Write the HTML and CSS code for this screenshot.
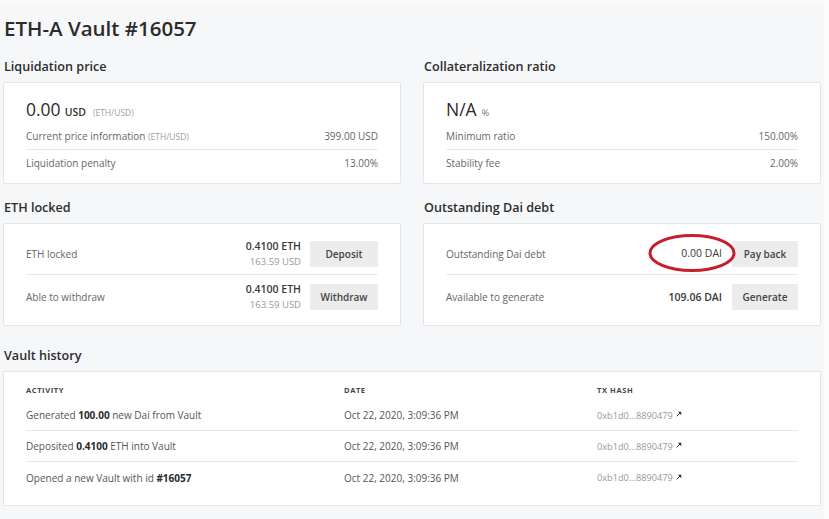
FILE: index.html
```html
<!DOCTYPE html>
<html>
<head>
<meta charset="utf-8">
<link rel="stylesheet" href="styles.css">
</head>
<body>
<div class="page">
  <h1 class="title">ETH-A Vault #16057</h1>

  <div class="grid">
    <section class="section">
      <h2 class="heading">Liquidation price</h2>
      <div class="card card-info">
        <div class="big"><span class="big-num">0.00</span><span class="big-unit">USD</span><span class="big-note">(ETH/USD)</span></div>
        <div class="row row-line"><span class="label">Current price information <span class="note">(ETH/USD)</span></span><span class="val">399.00 USD</span></div>
        <div class="row"><span class="label">Liquidation penalty</span><span class="val">13.00%</span></div>
      </div>
    </section>

    <section class="section">
      <h2 class="heading">Collateralization ratio</h2>
      <div class="card card-info">
        <div class="big"><span class="big-num">N/A</span><span class="big-pct">%</span></div>
        <div class="row row-line"><span class="label">Minimum ratio</span><span class="val">150.00%</span></div>
        <div class="row"><span class="label">Stability fee</span><span class="val">2.00%</span></div>
      </div>
    </section>

    <section class="section">
      <h2 class="heading">ETH locked</h2>
      <div class="card card-act">
        <div class="arow arow-line">
          <span class="label">ETH locked</span>
          <div class="amount"><div class="amt-main">0.4100 ETH</div><div class="amt-sub">163.59 USD</div></div>
          <button class="btn">Deposit</button>
        </div>
        <div class="arow arow-last">
          <span class="label">Able to withdraw</span>
          <div class="amount"><div class="amt-main">0.4100 ETH</div><div class="amt-sub">163.59 USD</div></div>
          <button class="btn">Withdraw</button>
        </div>
      </div>
    </section>

    <section class="section">
      <h2 class="heading">Outstanding Dai debt</h2>
      <div class="card card-act">
        <div class="arow arow-line">
          <span class="label">Outstanding Dai debt</span>
          <div class="amount amount-dai"><div class="amt-main amt-zero">0.00 DAI</div>
            <svg class="circle" viewBox="0 0 88 40" width="88" height="40"><ellipse cx="44" cy="20" rx="42" ry="17.5" fill="none" stroke="#c81e2c" stroke-width="3"/></svg>
          </div>
          <button class="btn btn-r">Pay back</button>
        </div>
        <div class="arow arow-last">
          <span class="label">Available to generate</span>
          <div class="amount amount-dai"><div class="amt-main">109.06 DAI</div></div>
          <button class="btn btn-r">Generate</button>
        </div>
      </div>
    </section>
  </div>

  <section class="section history">
    <h2 class="heading">Vault history</h2>
    <div class="card card-hist">
      <div class="trow thead">
        <span>Activity</span><span>Date</span><span>Tx hash</span>
      </div>
      <div class="trow tline">
        <span>Generated <b>100.00</b> new Dai from Vault</span>
        <span>Oct 22, 2020, 3:09:36 PM</span>
        <span class="hash">0xb1d0...8890479 <svg class="ext" viewBox="0 0 8 8" width="6" height="6"><path d="M1 7 L6 2" stroke="#333" stroke-width="1.3" fill="none"/><path d="M2.5 1 H7 V5.5 Z" fill="#333"/></svg></span>
      </div>
      <div class="trow tline">
        <span>Deposited <b>0.4100</b> ETH into Vault</span>
        <span>Oct 22, 2020, 3:09:36 PM</span>
        <span class="hash">0xb1d0...8890479 <svg class="ext" viewBox="0 0 8 8" width="6" height="6"><path d="M1 7 L6 2" stroke="#333" stroke-width="1.3" fill="none"/><path d="M2.5 1 H7 V5.5 Z" fill="#333"/></svg></span>
      </div>
      <div class="trow">
        <span>Opened a new Vault with id <b>#16057</b></span>
        <span>Oct 22, 2020, 3:09:36 PM</span>
        <span class="hash">0xb1d0...8890479 <svg class="ext" viewBox="0 0 8 8" width="6" height="6"><path d="M1 7 L6 2" stroke="#333" stroke-width="1.3" fill="none"/><path d="M2.5 1 H7 V5.5 Z" fill="#333"/></svg></span>
      </div>
    </div>
  </section>
</div>
</body>
</html>
```

FILE: styles.css
```css
* { box-sizing: border-box; }
html, body { margin: 0; padding: 0; }
body {
  background: #fbfbfc;
  font-family: "Open Sans", "Noto Sans", sans-serif;
  color: #333;
  width: 829px;
  height: 519px;
  overflow: hidden;
}
.page {
  background: #f6f7f9;
  width: 824px;
  padding: 13px 0 0 3px;
  height: 515px;
  margin-top: 4px;
}
.title {
  margin: -4px 0 14px 1px;
  font-size: 20.5px;
  line-height: 30px;
  font-weight: 600;
  color: #2b2b2b;
}
.grid {
  display: grid;
  grid-template-columns: 398px 398px;
  column-gap: 22px;
  row-gap: 14px;
}
.heading {
  margin: 0 0 5px 1px;
  font-size: 12.6px;
  line-height: 20px;
  font-weight: 600;
  color: #2d2d2d;
}
.card {
  background: #fff;
  border: 1px solid #e4e6ea;
  border-radius: 2px;
}
.card-info {
  padding: 13px 22px 7px;
  height: 102px;
}
.big {
  height: 26px;
  display: flex;
  align-items: baseline;
  line-height: 26px;
}
.big-num { font-size: 17.5px; color: #2b2b2b; font-weight: 500; }
.big-unit { font-size: 10.5px; font-weight: 600; color: #333; margin-left: 4px; }
.big-note { font-size: 8.5px; color: #a0a0a0; margin-left: 7px; }
.big-pct { font-size: 9px; color: #777; margin-left: 5px; }
.row {
  height: 26px;
  display: flex;
  justify-content: space-between;
  align-items: center;
  font-size: 10px;
  color: #666;
}
.row-line { height: 28px; border-bottom: 1px solid #e6e6e6; }
.label { font-size: 10px; color: #666; }
.note { font-size: 8.5px; color: #a0a0a0; }
.val { font-size: 10px; color: #666; }

.card-act {
  padding: 9px 22px 6px;
  height: 103px;
}
.arow {
  height: 42px;
  display: flex;
  align-items: center;
}
.arow-line { height: 42px; border-bottom: 1px solid #e6e6e6; }
.arow-last { height: 44px; }
.arow .label { flex: 1; }
.amount { text-align: right; margin-right: 9px; position: relative; }
.amount-dai { margin-right: 10px; }
.amt-main { font-size: 10.5px; font-weight: 600; color: #3a3a3a; line-height: 15px; }
.amt-sub { font-size: 9.5px; color: #9a9a9a; line-height: 15px; }
.amt-zero { font-weight: 500; }
.btn {
  width: 68px;
  height: 26px;
  border: none;
  background: #ececec;
  font-family: inherit;
  font-size: 10px;
  font-weight: 600;
  color: #444;
  padding: 0;
  border-radius: 1px;
}
.btn-r { width: 66px; }
.circle {
  position: absolute;
  left: -33px;
  top: 50%;
  margin-top: -21px;
  overflow: visible;
}

.history { margin-top: 20px; width: 818px; }
.history .heading { margin-bottom: 5px; }
.card-hist {
  padding: 8px 22px 12px;
  height: 135px;
}
.trow {
  display: grid;
  grid-template-columns: 318px 253px 1fr;
  align-items: center;
  height: 31px;
  font-size: 10px;
  color: #555;
}
.tline { border-bottom: 1px solid #e8e8e8; }
.trow b { color: #2b2b2b; font-weight: 700; }
.thead {
  height: 20px;
  font-size: 7.5px;
  font-weight: 700;
  text-transform: uppercase;
  letter-spacing: 0.6px;
  color: #444;
}
.hash { font-size: 9.2px; color: #999; display: flex; align-items: center; gap: 3px; }
.ext { margin-top: -2px; }
```
